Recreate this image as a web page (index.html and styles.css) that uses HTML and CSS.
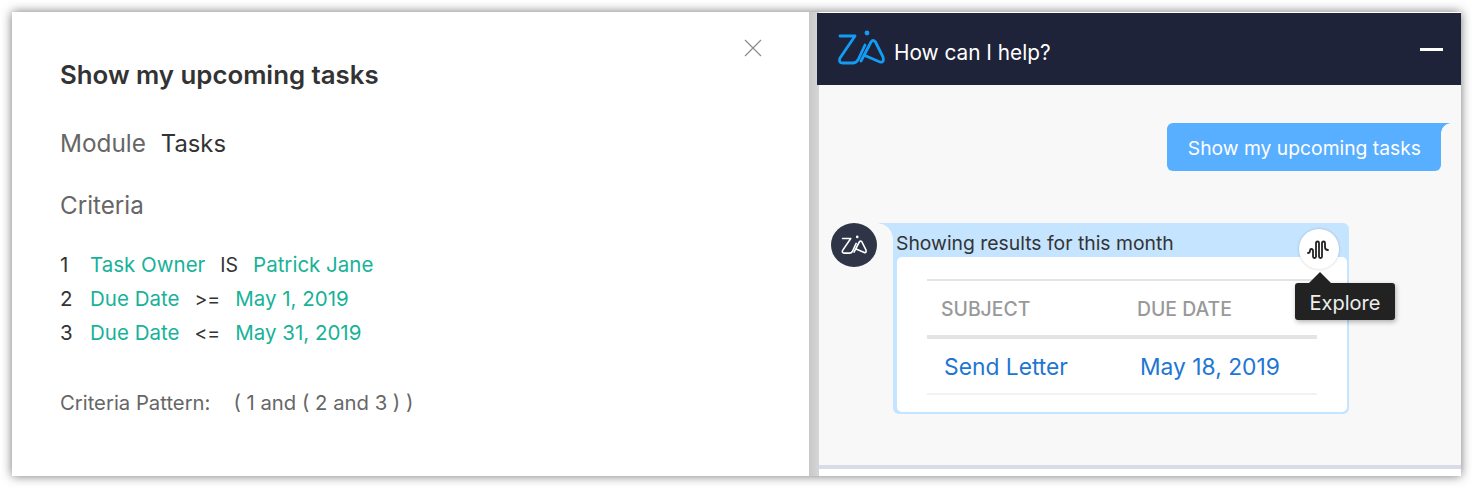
FILE: index.html
```html
<!DOCTYPE html>
<html lang="en">
<head>
    <meta charset="UTF-8">
    <meta name="viewport" content="width=device-width, initial-scale=1.0">
    <title>Show my upcoming tasks</title>
    <link rel="stylesheet" href="styles.css">
</head>
<body>
    <div class="window">
        <div class="details">
            <svg class="close" width="18" height="18" viewBox="0 0 18 18"><path d="M1 1L17 17M17 1L1 17" stroke="#8c8c8c" stroke-width="1.2" fill="none"/></svg>
            <h1>Show my upcoming tasks</h1>
            <p class="module"><span class="label">Module</span><span class="value">Tasks</span></p>
            <p class="criteria-title">Criteria</p>
            <div class="criteria">
                <div class="crit"><span class="num">1</span><span class="teal">Task Owner</span><span class="op">IS</span><span class="teal">Patrick Jane</span></div>
                <div class="crit"><span class="num">2</span><span class="teal">Due Date</span><span class="op">&gt;=</span><span class="teal">May 1, 2019</span></div>
                <div class="crit"><span class="num">3</span><span class="teal">Due Date</span><span class="op">&lt;=</span><span class="teal">May 31, 2019</span></div>
            </div>
            <p class="pattern"><span>Criteria Pattern:</span><span>( 1 and ( 2 and 3 ) )</span></p>
        </div>
        <div class="divider"></div>
        <div class="chat">
            <div class="chat-head">
                <svg class="zia-logo" width="48" height="36" viewBox="0 0 48 36" fill="none" stroke="#139cf5" stroke-width="2.800" stroke-linecap="round" stroke-linejoin="round">
                    <path d="M3 6H18L3 28Q1 33 6 33H16Q19 33 21 30L28 15"/>
                    <path d="M24 31L34 12Q36 9 38.500 12L46 27Q47.500 33 43 32L29 26"/>
                    <circle cx="30" cy="3" r="2.400" fill="#139cf5" stroke="none"/>
                </svg>
                <span class="chat-title">How can I help?</span>
                <span class="minimize"></span>
            </div>
            <div class="chat-body">
                <div class="user-row"><div class="user-msg">Show my upcoming tasks</div></div>
                <div class="bot-row">
                    <div class="avatar">
                        <svg width="26" height="20" viewBox="0 0 48 36" fill="none" stroke="#fff" stroke-width="3" stroke-linecap="round" stroke-linejoin="round">
                            <path d="M3 6H18L3 28Q1 33 6 33H16Q19 33 21 30L28 15"/>
                            <path d="M24 31L34 12Q36 9 38.500 12L46 27Q47.500 33 43 32L29 26"/>
                            <circle cx="30" cy="3" r="2.400" fill="#fff" stroke="none"/>
                        </svg>
                    </div>
                    <div class="bot-msg">
                        <div class="bot-text">Showing results for this month</div>
                        <div class="result">
                            <div class="result-table">
                                <div class="result-head"><span class="col-a">SUBJECT</span><span>DUE DATE</span></div>
                                <div class="result-row"><span class="col-a">Send Letter</span><span>May 18, 2019</span></div>
                            </div>
                        </div>
                        <div class="explore">
                            <svg width="24" height="24" viewBox="0 0 24 24" fill="none" stroke="#222" stroke-width="1.800" stroke-linecap="round"><path d="M1 16Q3 16 3 13.500A1.500 1.500 0 0 1 6 13.500V19.500A1.500 1.500 0 0 0 9 19.500V6A1.500 1.500 0 0 1 12 6V19.500A1.500 1.500 0 0 0 15 19.500V6A1.500 1.500 0 0 1 18 6V10Q18 13 21 13"/></svg>
                        </div>
                        <div class="tooltip">Explore</div>
                    </div>
                </div>
            </div>
            <div class="chat-foot"></div>
        </div>
    </div>
</body>
</html>
```

FILE: styles.css
```css
body {
    margin: 0;
    padding: 12px;
    background-color: #fff;
    font-family: Inter, "Open Sans", sans-serif;
    color: #333;
    overflow: hidden;
}
.window {
    display: flex;
    height: 464px;
    background-color: #fff;
    box-shadow: 0 0 10px rgba(0, 0, 0, 0.55);
}
.details {
    position: relative;
    width: 749px;
    padding-left: 48px;
}
.close {
    position: absolute;
    left: 732px;
    top: 27px;
}
h1 {
    margin: 47px 0 0;
    font-size: 25.800px;
    line-height: 32px;
    font-weight: 600;
    color: #333;
}
.module {
    margin: 37px 0 0;
    font-size: 24.300px;
    line-height: 30px;
}
.label {
    color: #666;
    margin-right: 15px;
}
.value {
    color: #333;
    font-size: 23.800px;
}
.criteria-title {
    margin: 32px 0 0;
    font-size: 24.200px;
    line-height: 30px;
    color: #666;
}
.criteria {
    margin-top: 27px;
    font-size: 20.500px;
}
.crit {
    display: flex;
    line-height: 34px;
}
.num {
    width: 30px;
    color: #333;
}
.teal {
    color: #17b298;
}
.op {
    margin: 0 15px;
    color: #333;
    font-size: 19.500px;
}
.pattern {
    display: flex;
    gap: 23px;
    margin: 39px 0 0;
    font-size: 20.300px;
    line-height: 28px;
    color: #666;
}
.divider {
    width: 10px;
    background: linear-gradient(to right, #c8c8c8, #d6d6d6);
}
.chat {
    flex: 1;
    display: flex;
    flex-direction: column;
    margin-top: 1px;
}
.chat-head {
    display: flex;
    align-items: center;
    height: 72px;
    flex-shrink: 0;
    background-color: #1e2339;
    padding: 0 18px 0 20px;
    margin-left: -2px;
}
.zia-logo {
    margin: 0 9px 2px 0;
}
.chat-title {
    flex: 1;
    color: #fff;
    font-size: 20.800px;
    margin-top: 7px;
}
.minimize {
    width: 23px;
    height: 3px;
    background-color: #fff;
}
.chat-body {
    flex: 1;
    background-color: #f8f8f8;
}
.chat-foot {
    height: 7px;
    border-top: 4px solid #d8dce6;
    background-color: #fff;
}
.user-row {
    display: flex;
    justify-content: flex-end;
    padding: 38px 20px 0 0;
}
.user-msg {
    position: relative;
    background-color: #58aeff;
    color: #fff;
    font-size: 19.300px;
    line-height: 45px;
    padding: 3px 20px 0 20.500px;
    border-radius: 6px 0 6px 6px;
}
.user-msg::after {
    content: "";
    position: absolute;
    left: 100%;
    top: 0;
    width: 10px;
    height: 10px;
    background: radial-gradient(circle at 100% 100%, transparent 9.500px, #58aeff 10px);
}
.bot-row {
    display: flex;
    margin-top: 52px;
    padding-left: 12px;
}
.avatar {
    display: flex;
    align-items: center;
    justify-content: center;
    width: 46px;
    height: 44px;
    border-radius: 50%;
    background-color: #2f3447;
    flex-shrink: 0;
}
.bot-msg {
    position: relative;
    width: 456px;
    margin-left: 16px;
    background-color: #c5e4ff;
    border-radius: 0 6px 6px 6px;
    padding: 0 2px 2px 4px;
    box-sizing: border-box;
}
.bot-msg::before {
    content: "";
    position: absolute;
    right: 100%;
    top: 0;
    width: 16px;
    height: 16px;
    background: radial-gradient(circle at 0 100%, transparent 15.500px, #c5e4ff 16px);
}
.bot-text {
    font-size: 19.350px;
    line-height: 27px;
    padding: 7px 0 0;
    margin-left: -1px;
    color: #333;
}
.result {
    background-color: #fff;
    border-radius: 5px;
    padding: 22px 30px 17px;
}
.result-head {
    display: flex;
    font-size: 19.400px;
    font-weight: 500;
    color: #999;
    line-height: 56px;
    height: 54px;
    border-top: 2px solid #e4e4e4;
    border-bottom: 4px solid #e4e4e4;
    padding-left: 14px;
}
.result-row {
    display: flex;
    font-size: 22.800px;
    color: #2176d2;
    line-height: 56px;
    height: 54px;
    border-bottom: 2px solid #f2f2f2;
    padding-left: 17px;
}
.col-a {
    width: 196px;
}
.explore {
    position: absolute;
    right: 10px;
    top: 6px;
    width: 40px;
    height: 40px;
    border-radius: 50%;
    background-color: #fff;
    box-shadow: 0 0 3px rgba(0, 0, 0, 0.2);
    display: flex;
    align-items: center;
    justify-content: center;
}
.tooltip {
    position: absolute;
    left: 402px;
    top: 60px;
    width: 100px;
    height: 37px;
    background-color: #222;
    color: #eee;
    font-size: 20px;
    line-height: 40px;
    text-align: center;
    border-radius: 3px;
    box-shadow: 1px 2px 5px rgba(0, 0, 0, 0.3);
}
.tooltip::before {
    content: "";
    position: absolute;
    left: 14px;
    top: -11px;
    border-left: 11px solid transparent;
    border-right: 11px solid transparent;
    border-bottom: 11px solid #222;
}
```
